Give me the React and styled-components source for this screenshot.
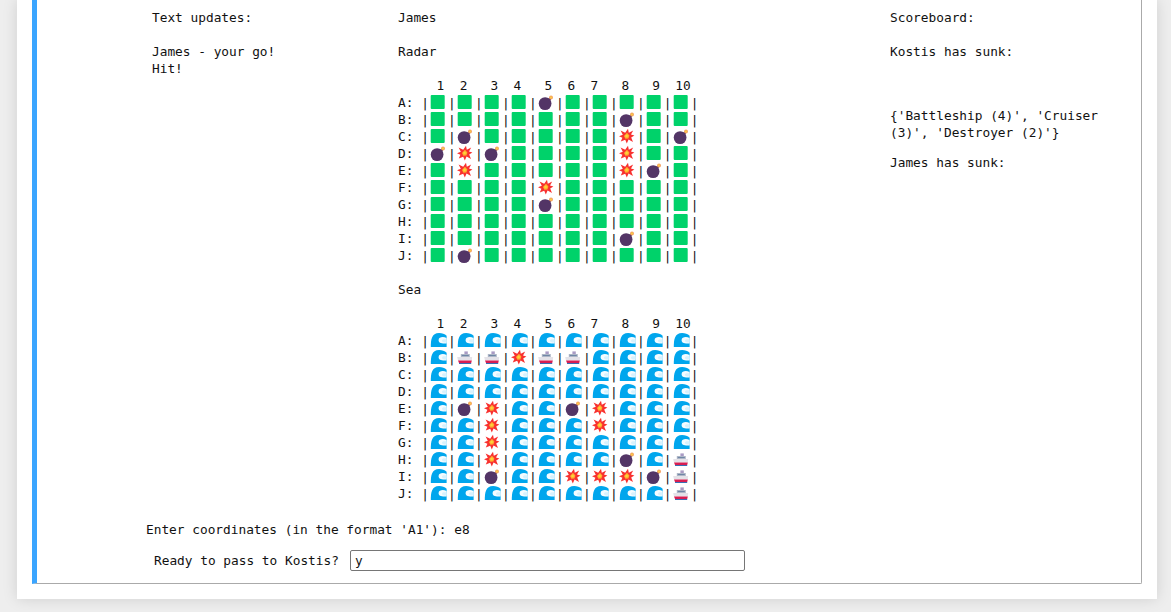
import React from "react";
import styled, { createGlobalStyle } from "styled-components";

const RADAR = [
    "....B.....",
    ".......B..",
    ".B.....X.B",
    "BXB....X..",
    ".X.....XB.",
    "....X.....",
    "....B.....",
    "..........",
    ".......B..",
    ".B........",
];

const SEA = [
    "..........",
    ".SSXSS....",
    "..........",
    "..........",
    ".BX..BX...",
    "..X...X...",
    "..X.......",
    "..X....B.S",
    "..B..XXXBS",
    ".........S",
];

const LETTERS = "ABCDEFGHIJ";
const HEADER = "     1  2   3  4   5  6  7   8   9  10";

const GlobalStyle = createGlobalStyle`
    html, body {
        margin: 0;
        height: 612px;
        overflow: hidden;
        background-color: #eeeeee;
    }
`;

const Sheet = styled.div`
    box-sizing: border-box;
    width: 1140px;
    height: 599px;
    margin-left: 17px;
    padding-right: 15px;
    padding-left: 15px;
    padding-bottom: 15px;
    background-color: white;
    box-shadow: 0 0 14px rgba(0, 0, 0, 0.13);
`;

const Output = styled.div`
    box-sizing: border-box;
    height: 584px;
    padding: 9px 0 0 109px;
    border-left: 5px solid #3ba5ff;
    border-right: 1px solid #aaaaaa;
    border-bottom: 1px solid #aaaaaa;
    border-bottom-right-radius: 2px;
    font-family: "DejaVu Sans Mono", monospace;
    font-size: 12.8px;
    line-height: 17px;
    color: #111111;
`;

const Columns = styled.div`
    display: grid;
    grid-template-columns: 246px 492px 212px;
    margin-left: 6px;
`;

const Column = styled.div`
    display: flex;
    flex-direction: column;
`;

const Line = styled.div`
    height: 17px;
    white-space: pre;
    margin-bottom: ${(props) => props.$gap || 0}px;
`;

const Wrapped = styled.div`
    margin-bottom: 13px;
`;

const Board = styled.div`
    display: flex;
    flex-direction: column;
    margin-bottom: 17px;
`;

const Row = styled.div`
    display: flex;
    align-items: center;
    height: 17px;
    white-space: pre;
`;

const Cell = styled.svg`
    flex: none;
    width: 19.25px;
    height: 17px;
`;

const Prompt = styled.div`
    margin-top: 2px;
    height: 17px;
`;

const PassRow = styled.label`
    display: flex;
    align-items: center;
    gap: 11px;
    margin-top: 12px;
    margin-left: 8px;
`;

const Answer = styled.input`
    box-sizing: border-box;
    width: 395px;
    height: 21px;
    padding: 0 4px;
    border: 1px solid #767676;
    border-radius: 2px;
    font-family: "DejaVu Sans Mono", monospace;
    font-size: 12.8px;
    color: #111111;
    background-color: white;
`;

const Icon = ({ kind }) => {
    if (kind === "B") {
        return (
            <Cell viewBox="0 0 19.25 17">
                <circle cx="8.1" cy="9.6" r="6.4" fill="#533566" />
                <path d="M10.4 5 L13 3.6 L14 5.4 L12.4 7.6 Z" fill="#533566" />
                <circle cx="14" cy="3.4" r="2" fill="#f4a261" />
                <circle cx="14" cy="3.4" r="0.9" fill="#fcd53f" />
            </Cell>
        );
    }
    if (kind === "X") {
        return (
            <Cell viewBox="0 0 19.25 17">
                <path
                    d="M10 0.8 L10.8 4.8 L15.2 2.4 L13 6.6 L16.4 7.6 L13.2 9.6 L15 14 L10.6 11.6 L8.8 15.6 L7.2 11.8 L2.8 13.6 L4.4 9.8 L1 8.2 L4.8 6.8 L2.6 2.6 L7.2 4.8 Z"
                    fill="#f8312f"
                />
                <path d="M9 4.8 L11.4 7.4 L10.4 10.4 L7.4 10.8 L6 8 Z" fill="#ffb02e" />
                <circle cx="8.6" cy="8" r="1.3" fill="#fcd53f" />
            </Cell>
        );
    }
    if (kind === "S") {
        return (
            <Cell viewBox="0 0 19.25 17">
                <path d="M8.4 2.4 H11.8 V5 H8.4 Z" fill="#a99bc4" />
                <path d="M4.8 5 H13.8 V8 H4.8 Z" fill="#aeb6c6" />
                <path d="M5.8 6 H12.8 V7 H5.8 Z" fill="#6f86a6" />
                <path d="M1.2 8 H16.2 L15.8 11.4 H2 Z" fill="#e4e2e8" />
                <path d="M2 11.4 H15.8 L15.2 14 H3 Z" fill="#d81e52" />
                <path d="M3 14 H15.2 V15 H3 Z" fill="#3a6fb5" />
            </Cell>
        );
    }
    if (kind === "W") {
        return (
            <Cell viewBox="0 0 19.25 17">
                <path
                    d="M1.8 15 C1.8 8 2.4 1 10.2 1 C13 1 15.8 2 17.6 3.8 L17.6 15 Z"
                    fill="#00a6ed"
                />
                <path
                    d="M17.6 6 C14.4 4.4 9.8 4.8 9.6 8 C9.4 10.8 12.4 11.8 17.6 11.4 Z"
                    fill="#f4fcff"
                />
                <path
                    d="M17.6 7.6 C15.6 7 13.4 7.2 13 8.4 C12.8 9.4 13.8 10.2 15.2 10.4 L17.6 10.4 Z"
                    fill="#d6f1fd"
                />
            </Cell>
        );
    }
    return (
        <Cell viewBox="0 0 19.25 17">
            <rect x="1.7" y="1" width="14" height="14" rx="1" fill="#00d26a" />
        </Cell>
    );
};

const Grid = ({ rows, empty }) => (
    <Board>
        <Row>{HEADER}</Row>
        {rows.map((row, i) => (
            <Row key={LETTERS[i]}>
                {LETTERS[i]}: |
                {row.split("").map((c, j) => (
                    <React.Fragment key={j}>
                        <Icon kind={c === "." ? empty : c} />|
                    </React.Fragment>
                ))}
            </Row>
        ))}
    </Board>
);

const App = () => (
    <Sheet>
        <GlobalStyle />
        <Output>
            <Columns>
                <Column>
                    <Line $gap={17}>Text updates:</Line>
                    <Line>James - your go!</Line>
                    <Line>Hit!</Line>
                </Column>
                <Column>
                    <Line $gap={17}>James</Line>
                    <Line $gap={17}>Radar</Line>
                    <Grid rows={RADAR} empty="G" />
                    <Line $gap={17}>Sea</Line>
                    <Grid rows={SEA} empty="W" />
                </Column>
                <Column>
                    <Line $gap={17}>Scoreboard:</Line>
                    <Line $gap={47}>Kostis has sunk:</Line>
                    <Wrapped>{"{'Battleship (4)', 'Cruiser (3)', 'Destroyer (2)'}"}</Wrapped>
                    <Line>James has sunk:</Line>
                </Column>
            </Columns>
            <Prompt>Enter coordinates (in the format 'A1'): e8</Prompt>
            <PassRow>
                Ready to pass to Kostis?
                <Answer defaultValue="y" />
            </PassRow>
        </Output>
    </Sheet>
);

export default App;
